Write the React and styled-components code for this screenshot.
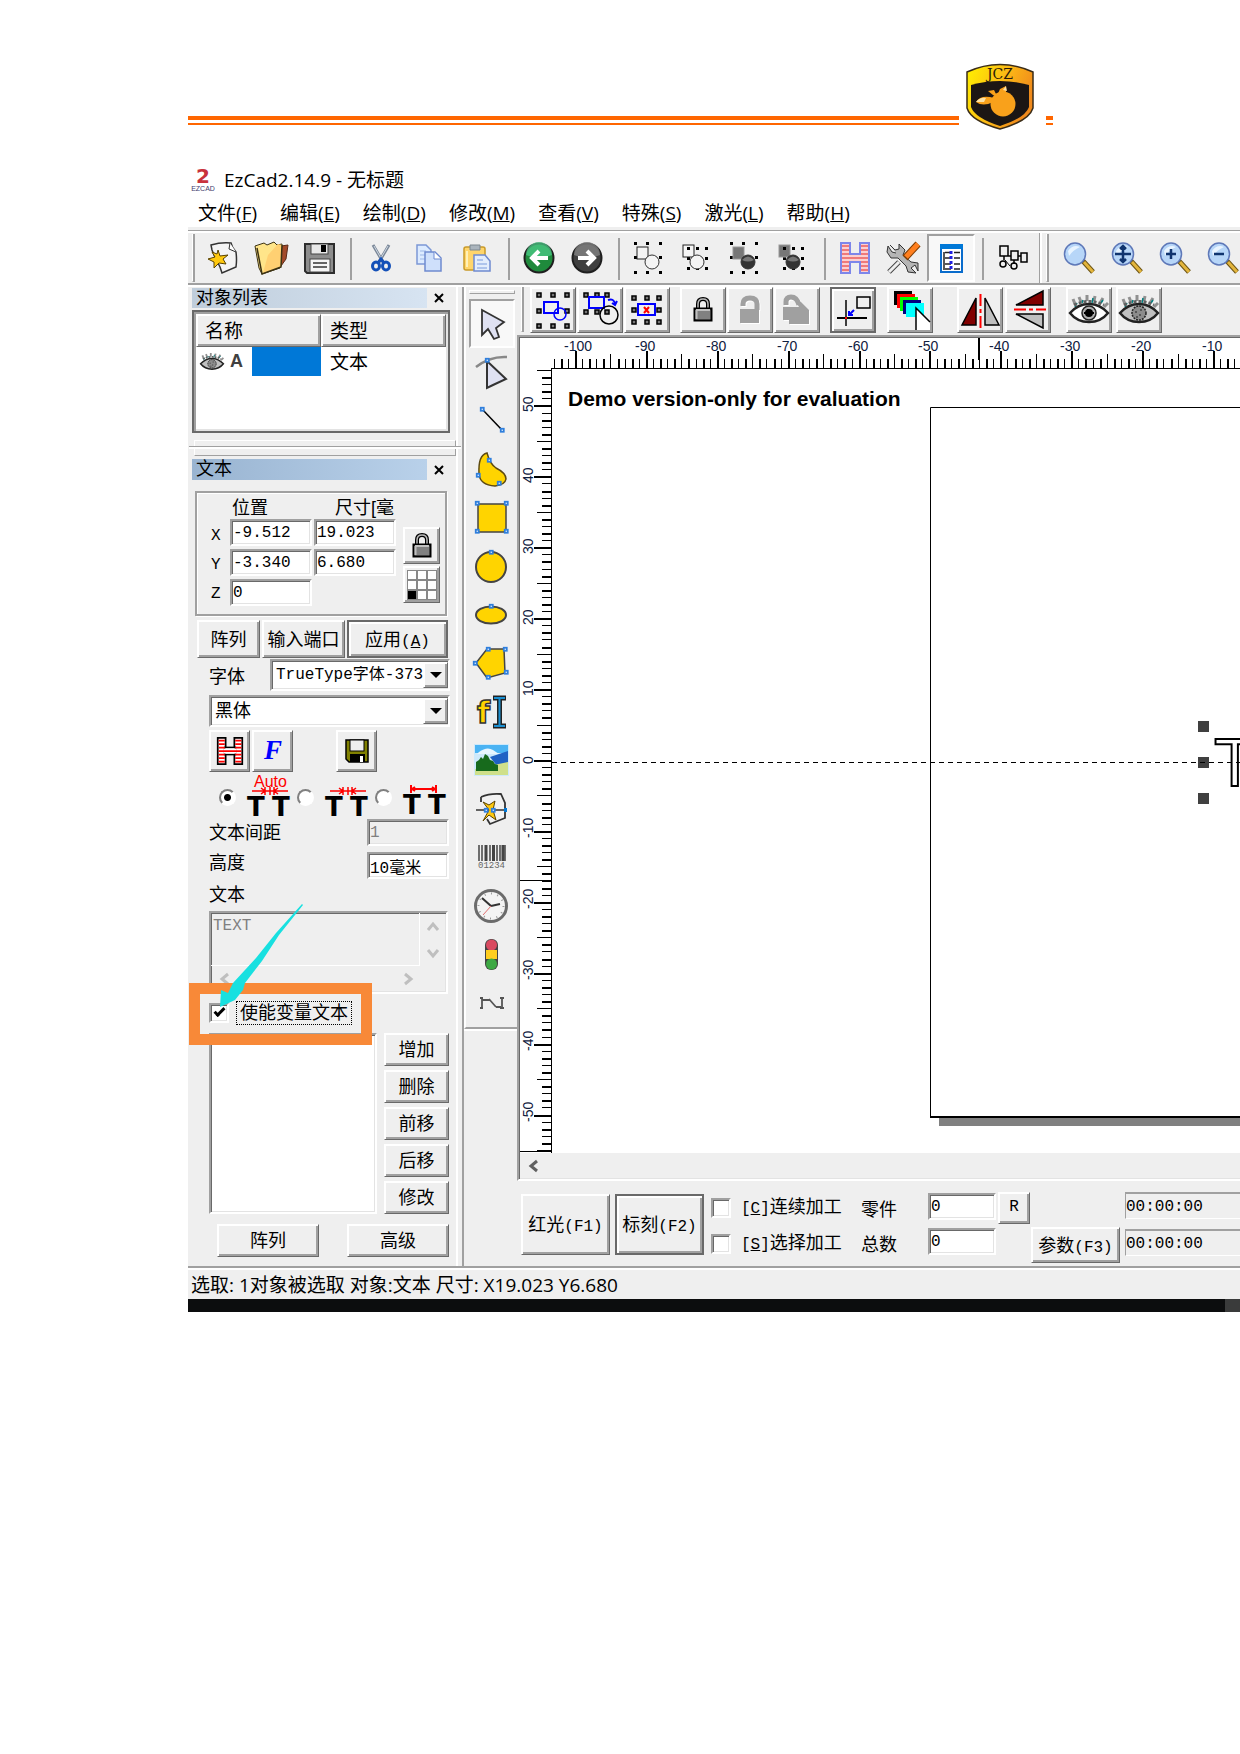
import React from 'react'
import styled, { createGlobalStyle, css } from 'styled-components'

const GlobalStyle = createGlobalStyle`
  *, *::before, *::after {
    box-sizing: border-box;
  }
  body {
    margin: 0;
    background: #fff;
    color: #000;
    overflow-x: hidden;
  }
  svg {
    display: block;
    flex: none;
    overflow: visible;
  }
`

const ui = '"Open Sans", "Noto Sans CJK SC", sans-serif'
const dialog = '"Liberation Sans", "Noto Sans CJK SC", sans-serif'
const mono = '"Liberation Mono", "Noto Sans CJK SC", monospace'

const raised = css`
  border: 1px solid;
  border-color: #fff #696969 #696969 #fff;
  box-shadow: inset 1px 1px #fff, inset -2px -2px #a0a0a0;
`

const sunken = css`
  border: 2px solid;
  border-color: #a0a0a0 #fff #fff #a0a0a0;
  box-shadow: inset 1px 1px #696969, inset -1px -1px #e3e3e3;
`

/* ---------- page header ---------- */

const Header = styled.header`
  display: flex;
  align-items: flex-start;
  margin: 0 187px 0 188px;
  padding-top: 64px;
`

const Rule = styled.div`
  flex: ${p => (p.$tail ? 'none' : 1)};
  width: ${p => (p.$tail ? '7px' : 'auto')};
  height: 9px;
  margin-top: 52px;
  border-top: 4px solid #ff6600;
  border-bottom: 2px solid #ff6600;
`

const LogoBox = styled.div`
  padding: 0 12px 0 7px;
`

const Logo = () => (
  <svg width="68" height="66" viewBox="0 0 68 66">
    <defs>
      <linearGradient id="gold" x1="0" y1="0" x2="1" y2="0.4">
        <stop offset="0" stopColor="#fff200" />
        <stop offset="0.6" stopColor="#fbb516" />
        <stop offset="1" stopColor="#f08a1c" />
      </linearGradient>
    </defs>
    <path d="M1 8Q34-7 67 8V44Q63 57 34 65Q5 57 1 44Z" fill="url(#gold)" stroke="#3a2c18" strokeWidth="1.5" />
    <path d="M5 21Q34 13 63 21V43Q59 54 34 62Q9 54 5 43Z" fill="#1c1614" />
    <circle cx="37" cy="40" r="12.500" fill="#f9a11b" />
    <path d="M27 38Q17 43 10 38Q15 30 28 34ZM31 32L34 25L40 22L40 29L37 32ZM22 27L28 26L31 32L27 31Z" fill="#f9a11b" />
    <path d="M10 38Q14 33 20 34L18 38ZM37 26L40 22L41 27Z" fill="#fde2a6" />
    <text x="34" y="15" textAnchor="middle" fontFamily="DejaVu Serif, serif" fontSize="14" fill="#2b1a08">
      JCZ
    </text>
  </svg>
)

/* ---------- window chrome ---------- */

const Window = styled.main`
  margin: 35px 0 0 188px;
  overflow: hidden;
  font: 18px ${dialog};
`

const TitleBar = styled.div`
  display: flex;
  align-items: center;
  gap: 9px;
  height: 32px;
  padding: 0 0 4px 3px;
  font: 19px ${ui};
`

const MenuBar = styled.nav`
  display: flex;
  gap: 23px;
  height: 30px;
  padding: 0 10px;
`

const MenuItem = styled.button`
  border: 0;
  padding: 0;
  background: none;
  color: #000;
  font: 19px/32px ${ui};
  white-space: nowrap;
`

const Toolbar = styled.div`
  display: flex;
  height: 58px;
  border-top: 3px solid #efefef;
  border-bottom: 2px solid #a0a0a0;
  background: #efefef;
  box-shadow: inset 0 1px #a0a0a0, inset 0 3px #fff;
`

const Gripper = styled.div`
  flex: none;
  width: 3px;
  height: ${p => p.$height}px;
  margin: ${p => p.$margin};
  border-right: 2px solid #a0a0a0;
  border-bottom: 1px solid #a0a0a0;
  border-left: 1px solid #fff;
`

const ToolButton = styled.button`
  display: flex;
  flex: none;
  align-items: center;
  justify-content: center;
  width: 48px;
  height: 48px;
  margin-top: 4px;
  padding: 0;
  background: ${p => (p.$checked ? '#f8f8f8' : 'none')};
  border: 2px solid transparent;
  border-color: ${p => (p.$checked ? '#a0a0a0 #fff #fff #a0a0a0' : 'transparent')};
`

const Divider = styled.div`
  flex: none;
  width: 2px;
  height: 42px;
  margin: 8px 5px 0 7px;
  background: #a0a0a0;
`

const BarEnd = styled.div`
  flex: none;
  width: 10px;
  margin: 3px 0 0 2px;
  border-left: 1px solid #a0a0a0;
  box-shadow: inset 2px 0 #fff;
`

/* ---------- work space ---------- */

const Workspace = styled.div`
  display: flex;
  border-top: 2px solid #fff;
  background: #efefef;
`

const Dock = styled.aside`
  flex: none;
  width: 276px;
  padding-right: 4px;
  border-right: 2px solid #a0a0a0;
`

const DockInner = styled.div`
  height: 100%;
  padding: 1px 6px 9px 4px;
  border-right: 2px solid #fff;
`

const PanelTitle = styled.div`
  display: flex;
  justify-content: space-between;
  align-items: center;
  height: ${p => (p.$active ? 21 : 20)}px;
  padding-right: 6px;

  h2 {
    width: 235px;
    height: 100%;
    margin: 0;
    padding-left: 4px;
    background: ${p =>
      p.$active ? 'linear-gradient(90deg, #99b4d1, #b9d1ea)' : 'linear-gradient(90deg, #bfcddb, #d7e4f2)'};
    font: 18px/20px ${dialog};
  }
`

const CloseButton = styled.button`
  width: 10px;
  height: 10px;
  padding: 0;
  border: 0;
  background: none;
`

const ObjectBox = styled.div`
  height: 123px;
  margin-top: 2px;
  padding: 2px;
  border: 2px solid #696969;
  background: #fff;
  box-shadow: inset 2px 2px #a0a0a0, inset -2px -2px #e3e3e3;
`

const ObjectTable = styled.table`
  width: 100%;
  border-spacing: 0;
  table-layout: fixed;

  th {
    ${raised};
    height: 33px;
    padding: 0 8px;
    background: #efefef;
    font: 19px/28px ${ui};
    text-align: left;
  }
  td {
    height: 29px;
    padding: 0 0 0 9px;
    font: 19px/28px ${ui};
  }
  td:first-child {
    padding: 0 0 0 4px;
  }
`

const NameCell = styled.div`
  display: flex;
  align-items: center;
  gap: 6px;
  height: 29px;
  font: bold 18px "Liberation Sans", sans-serif;
  color: #404040;

  span {
    width: 16px;
  }
`

const Selection = styled.i`
  flex: 1;
  height: 29px;
  background: #0078d7;
`

const Splitter = styled.div`
  height: 16px;
  margin: 7px -6px 3px 2px;
  border: 1px solid #a0a0a0;
  border-color: #fff #a0a0a0 #a0a0a0 #fff;

  &::before {
    content: '';
    display: block;
    height: 3px;
    margin: 5px -6px 0 -6px;
    border-top: 1px solid #a0a0a0;
    border-bottom: 2px solid #fff;
  }
`

const Position = styled.fieldset`
  display: grid;
  grid-template-columns: 17px 82px 82px 37px;
  column-gap: 2px;
  justify-content: start;
  height: 125px;
  margin: 11px 3px 0 3px;
  padding: 3px 0 0 14px;
  border: 2px solid #a0a0a0;
  box-shadow: inset 1px 1px #fff, 1px 1px #fff;
`

const Column = styled.div`
  display: flex;
  flex-direction: column;
  gap: ${p => p.$gap || 0}px;
  padding: ${p => p.$top || 0}px 0 0 ${p => p.$left || 0}px;
`

const Heading = styled.span`
  height: 20px;
  padding-left: ${p => p.$indent}px;
  line-height: 24px;
  white-space: nowrap;
`

const AxisLabel = styled.label`
  height: 24px;
  font: 16px/32px ${mono};
`

const Field = styled.input`
  ${sunken};
  flex: none;
  width: ${p => p.$width || 82}px;
  height: 27px;
  padding: 0 1px;
  border-radius: 0;
  background: #fff;
  color: #000;
  font: 16px ${mono};

  &:disabled {
    background: #efefef;
    color: #808080;
  }
`

const Button = styled.button`
  ${raised};
  display: flex;
  flex: none;
  align-items: center;
  justify-content: center;
  width: ${p => p.$width}px;
  height: ${p => p.$height || 33}px;
  padding: 0 0 ${p => (p['aria-label'] || p.title ? 0 : 3)}px;
  background: #efefef;
  color: #000;
  font: 18px ${dialog};
  white-space: nowrap;

  ${p =>
    p.$default &&
    css`
      border: 2px solid #696969;
      box-shadow: inset 2px 2px #fff, inset -2px -2px #a0a0a0;
    `}
`

const Latin = styled.span`
  font: 16px ${mono};
`

const Row = styled.div`
  display: flex;
  align-items: ${p => p.$align || 'center'};
  justify-content: ${p => p.$justify || 'flex-start'};
  gap: ${p => p.$gap || 0}px;
  margin: ${p => p.$margin || 0};
`

const FontLabel = styled.label`
  width: 61px;
`

const SelectBox = styled.div`
  ${sunken};
  display: flex;
  flex: 1;
  min-width: 0;
  height: 32px;
  padding: 1px 0 1px 2px;
  background: #fff;

  select {
    flex: 1;
    min-width: 0;
    padding: 0 0 0 2px;
    border: 0;
    appearance: none;
    background: none;
    color: #000;
    font: ${p => (p.$latin ? 16 : 18)}px ${p => (p.$latin ? mono : dialog)};
    overflow: hidden;
    text-overflow: clip;
  }
`

const DropArrow = styled.span`
  ${raised};
  display: flex;
  flex: none;
  align-items: center;
  justify-content: center;
  width: 25px;
  background: #efefef;
`

const SpacingOption = styled.label`
  display: flex;
  gap: 10px;

  input {
    width: 17px;
    height: 17px;
    margin: 14px 0 0;
    appearance: none;
    border: 2px solid;
    border-color: #808080 #fff #fff #808080;
    border-radius: 50%;
    background: #fff;
  }
  input:checked {
    background: radial-gradient(circle, #000 3px, #fff 4px);
  }
`

const FormLine = styled.div`
  display: flex;
  align-items: center;
  justify-content: space-between;
  height: ${p => p.$height || 27}px;
  margin: ${p => p.$margin || 0};

  label {
    padding-bottom: ${p => p.$lift || 3}px;
  }
`

const TextBox = styled.div`
  display: grid;
  grid-template-columns: 1fr 26px;
  grid-template-rows: 1fr 26px;
  ${sunken};
  width: 239px;
  height: 83px;

  textarea {
    min-width: 0;
    margin: 0;
    padding: 4px 2px;
    border: 0;
    border-right: 1px solid #fff;
    border-bottom: 1px solid #fff;
    resize: none;
    overflow: hidden;
    background: none;
    color: #808080;
    font: 16px ${mono};
  }
`

const ScrollTrack = styled.div`
  display: flex;
  flex-direction: ${p => (p.$vertical ? 'column' : 'row')};
  align-items: center;
  justify-content: space-between;
  padding: ${p => (p.$vertical ? '8px 0 7px' : '0 6px 0 8px')};
`

const Check = styled.input`
  ${sunken};
  flex: none;
  display: grid;
  place-items: center;
  width: 20px;
  height: 20px;
  margin: 0;
  appearance: none;
  background: #fff;

  &:checked::after {
    content: '';
    width: 11px;
    height: 6px;
    margin-top: -4px;
    border: solid #000;
    border-width: 0 0 3px 3px;
    transform: rotate(-45deg);
  }
`

const VariableRow = styled.div`
  position: relative;
  display: flex;
  align-items: center;
  gap: 7px;
  height: 24px;
  margin-top: 7px;

  label {
    height: 24px;
    padding: 0 3px;
    border: 1px dotted #000;
    line-height: 23px;
  }
`

/* marker drawn over the form */
const Callout = styled.div`
  position: absolute;
  z-index: 1;
  top: -18px;
  left: -20px;
  width: 183px;
  height: 62px;
  border: 11px solid #f88938;
  pointer-events: none;
`

const Pointer = styled.svg`
  position: absolute;
  z-index: 2;
  top: -98px;
  left: 9px;
  pointer-events: none;
`

const ListBox = styled.div`
  ${sunken};
  width: 168px;
  background: #fff;
`

/* ---------- drawing tools ---------- */

const ToolColumn = styled.div`
  display: flex;
  flex: none;
  flex-direction: column;
  width: 53px;
  height: 742px;
  padding: 3px 2px 0 3px;
  border-left: 2px solid #fff;
  border-bottom: 2px solid #a0a0a0;
  box-shadow: 0 2px #fff;
`

const ColumnGrip = styled.div`
  height: 4px;
  margin-bottom: 5px;
  border: 1px solid #a0a0a0;
  border-color: #fff #a0a0a0 #a0a0a0 #fff;
`

const DrawButton = styled.button`
  display: flex;
  flex: 1;
  align-items: center;
  justify-content: center;
  padding: 0;
  border: 2px solid;
  border-color: ${p => (p.$checked ? '#a0a0a0 #fff #fff #a0a0a0' : 'transparent')};
  background: ${p => (p.$checked ? '#f8f8f8' : 'none')};
`

const Center = styled.div`
  display: flex;
  flex: 1;
  flex-direction: column;
  min-width: 0;
`

const EditBar = styled.div`
  display: flex;
  height: 48px;
  overflow: hidden;
`

const EditButton = styled(Button)`
  width: 46px;
  height: 46px;
  margin-left: ${p => p.$left || 1}px;
`

const View = styled.section`
  display: grid;
  grid-template-columns: 31px 1fr;
  grid-template-rows: 31px 1fr 26px;
  flex: 1;
  border: solid #a0a0a0;
  border-width: 2px 0 0 2px;
  box-shadow: inset 1px 1px #696969;
  padding: 1px 0 0 1px;
  border-bottom: 2px solid #fff;

  > svg {
    width: 100%;
    height: 100%;
    background: #fff;
    overflow: hidden;
  }
`

const Sheet = styled.div`
  position: relative;
  overflow: hidden;
  background: #fff;
  border-left: 1px solid #000;

  > p {
    margin: 18px 0 0 16px;
    font: bold 21px/24px "Liberation Sans", sans-serif;
  }
  > svg {
    position: absolute;
    inset: 0;
    width: 100%;
    height: 100%;
  }
`

const HScroll = styled.div`
  grid-column: 1 / -1;
  display: flex;
  align-items: center;
  padding-left: 8px;
  background: #efefef;
  border-bottom: 1px solid #e3e3e3;
`

const MarkPanel = styled.div`
  display: flex;
  align-items: flex-start;
  height: 85px;
  padding: 10px 0 0 4px;
`

const CheckLine = styled.label`
  display: flex;
  align-items: center;
  gap: 10px;
  width: 150px;
  height: 21px;
  white-space: nowrap;

  span {
    line-height: 20px;
  }
`

const CountLine = styled.label`
  display: flex;
  align-items: center;

  span {
    width: 67px;
    padding-top: 3px;
  }
`

const Clock = styled.output`
  display: block;
  width: 160px;
  height: 27px;
  border: 1px solid;
  border-top-width: 2px;
  border-color: #a0a0a0 #fff #fff #a0a0a0;
  font: 16px/26px ${mono};
`

const StatusBar = styled.footer`
  height: 33px;
  padding-left: 3px;
  border-top: 2px solid #a0a0a0;
  background: #efefef;
  box-shadow: inset 0 2px #fff;
  font: 19px/34px ${ui};
`

const Taskbar = styled.div`
  height: 13px;
  border-right: 15px solid #3a3b3b;
  background: #0c0d0e;
`

/* ---------- icons ---------- */

const Icon = ({ size = 32, children, ...rest }) => (
  <svg width={size} height={size} viewBox={`0 0 ${size} ${size}`} aria-hidden="true" {...rest}>
    {children}
  </svg>
)

const dots = (xs, ys, s) =>
  ys.flatMap((y, j) =>
    xs.map((x, i) => (i === 1 && j === 1 ? null : <rect key={`${x}-${y}`} x={x} y={y} width={s} height={s} />))
  )

const hollow = points =>
  points.map(([x, y]) => (
    <rect key={`${x}-${y}`} x={x + 0.75} y={y + 0.75} width="3" height="3" fill="#fff" stroke="#2f7fdc" strokeWidth="1.8" />
  ))

const NewIcon = () => (
  <Icon>
    <path d="M4 3Q14 0 24 1Q25 6 29 10Q30 18 29 25L15 31L13 25L7 13L5 8Z" fill="#f4f4f4" stroke="#333" strokeWidth="1.5" />
    <path d="M23 1L22 7L29 10" fill="#fff" stroke="#333" />
    <path d="M11 8L13 14L21 13L16 17L19 22L12 21L7 26L7 20L1 17L8 15L5 10L10 12Z" fill="#ffc90e" stroke="#5a4300" />
  </Icon>
)
const OpenIcon = () => (
  <Icon size={34}>
    <path d="M27 5L34 4L32 18L27 25Z" fill="#a34a2a" stroke="#5b2a18" />
    <path d="M1 5L10 2L13 4L20 1L23 4L28 3L26 27L8 33L5 27Z" fill="#ffe58a" stroke="#3c3213" />
    <path d="M14 14L24 3L28 4L27 26L9 32Z" fill="#ffd072" />
    <path d="M3 7L8 33L27 26L28 4" fill="none" stroke="#3c3213" strokeWidth="1.5" />
  </Icon>
)
const SaveIcon = () => (
  <Icon>
    <path d="M2 2H31V31H4L2 29Z" fill="#8d8d8d" stroke="#2d2d2d" strokeWidth="2" />
    <rect x="8" y="2" width="17" height="10" fill="#e8e8e8" stroke="#444" />
    <rect x="18" y="3" width="5" height="7" fill="#000" />
    <rect x="7" y="17" width="20" height="13" fill="#f4f4f4" stroke="#444" />
    <path d="M10 21H24M10 25H24" stroke="#333" strokeWidth="1.5" />
  </Icon>
)
const CutIcon = () => (
  <Icon>
    <path d="M8 3L18 20M24 3L14 20" stroke="#7a8798" strokeWidth="3" />
    <path d="M9 4L17 18M23 4L16 16" stroke="#cfd8e2" />
    <ellipse cx="11" cy="24" rx="3.5" ry="4" fill="none" stroke="#1450b8" strokeWidth="3" />
    <ellipse cx="21" cy="24" rx="3.5" ry="4" fill="none" stroke="#1450b8" strokeWidth="3" />
    <path d="M13 21L16 17L19 21" fill="none" stroke="#1450b8" strokeWidth="3" />
  </Icon>
)
const CopyIcon = () => (
  <Icon>
    <path d="M4 3H13L18 8V22H4Z" fill="#dcebff" stroke="#7c98d6" strokeWidth="1.5" />
    <path d="M7 9H13M7 13H14M7 17H14" stroke="#9db7e6" />
    <path d="M12 10H22L28 16V29H12Z" fill="#cfe0fb" stroke="#6f8ad0" strokeWidth="1.5" />
    <path d="M21 10V17H28" fill="#fff" stroke="#6f8ad0" />
  </Icon>
)
const PasteIcon = () => (
  <Icon>
    <rect x="3" y="5" width="21" height="23" rx="2" fill="#ffd56b" stroke="#c99a2a" strokeWidth="1.5" />
    <path d="M9 3H19V8H9Z" fill="#aab4bd" stroke="#7d878f" />
    <path d="M6 9L6 25" stroke="#fff1b8" strokeWidth="2" />
    <path d="M13 13H24L29 19V29H13Z" fill="#e3edfc" stroke="#6f8ad0" strokeWidth="1.5" />
    <path d="M16 18H22M16 22H26M16 26H26" stroke="#9db7e6" strokeWidth="1.5" />
  </Icon>
)
const RoundArrow = ({ from, to, d }) => (
  <Icon>
    <circle cx="16" cy="16" r="14.5" fill={from} stroke="#1f1f1f" strokeWidth="2" />
    <path d="M3 13A13 13 0 0 1 29 13Q16 19 3 13Z" fill={to} opacity="0.7" />
    <path d={d} fill="none" stroke="#fff" strokeWidth="4" />
  </Icon>
)
const ShapesIcon = ({ solid, tight }) => (
  <Icon>
    {tight ? dots([6, 15, 24], [5, 15, 25], 3) : dots([1, 13, 26], [0, 14, 29], 3)}
    <rect x={tight ? 2 : 4} y={tight ? 3 : 5} width="11" height="12" fill={solid ? '#777' : '#fff'} stroke={solid ? '#999' : '#222'} fillOpacity={solid ? 1 : 0.4} />
    <circle cx={tight ? 16 : 19} cy={20} r="7" fill={solid ? '#333' : '#f4f4f4'} stroke="#333" />
    {solid && <path d={tight ? 'M10 18Q16 11 22 18Q16 21 10 18Z' : 'M13 18Q19 11 25 18Q19 21 13 18Z'} fill="#777" />}
    {tight && <rect x="6" y="5" width="3" height="3" />}
  </Icon>
)
const HatchIcon = ({ size = 32, line, edge, back }) => (
  <Icon size={size}>
    {[
      [2, 1, 9, 30],
      [21, 1, 9, 30],
      [10, 12, 12, 8]
    ].map(([x, y, w, h]) => (
      <rect key={x} x={x} y={y} width={w} height={h} fill={back} stroke={edge} strokeWidth="2" />
    ))}
    <rect x="9" y="13" width="14" height="6" fill={back} />
    <path d="M3 4H10M3 8H10M3 12H10M3 16H29M3 20H10M3 24H10M3 28H10M22 4H29M22 8H29M22 12H29M22 20H29M22 24H29M22 28H29" stroke={line} strokeWidth="2" />
  </Icon>
)
const WrenchIcon = () => (
  <Icon size={34}>
    <path d="M3 31L13 21" stroke="#444" strokeWidth="5" />
    <path d="M3 31L13 21" stroke="#eee" strokeWidth="3" />
    <path d="M4 4L9 9L13 8L13 3L19 9L17 14L25 21L32 22L32 30L29 24L25 27L30 32L22 31L20 25L12 17L5 17L1 11L2 5L6 11L10 12" fill="#b5b5b5" stroke="#333" />
    <path d="M19 17L32 3" stroke="#7a3a00" strokeWidth="7" />
    <path d="M20 16L32 3" stroke="#ff7f1e" strokeWidth="5" />
  </Icon>
)
const ListIcon = () => (
  <Icon>
    <rect x="6" y="4" width="21" height="26" fill="#fff" stroke="#0a6ccc" strokeWidth="2" />
    <rect x="5" y="2" width="23" height="5" fill="#0078d7" />
    <path d="M9 10V28M10 10.500H16M19 10.500H25M10 16H16M19 16H25M10 22H16M19 22H25M10 27H16M19 27H25" stroke="#222" strokeWidth="1.5" />
    <path d="M16 9V28" stroke="#2020e0" strokeWidth="3" strokeDasharray="3 2" />
  </Icon>
)
const NodesIcon = () => (
  <Icon>
    <path d="M3 4H11V14H3ZM14 9H21V18H14ZM24 11H30V20H24ZM11 14H14M21 14H24M7 14V18M17 18V22" fill="none" stroke="#000" strokeWidth="1.5" />
    <circle cx="6" cy="22" r="3" fill="none" stroke="#000" strokeWidth="1.5" />
    <circle cx="17" cy="24" r="3" fill="none" stroke="#000" strokeWidth="1.5" />
    <path d="M8 18L13 24" stroke="#000" />
  </Icon>
)
const ZoomIcon = ({ d }) => (
  <Icon>
    <path d="M20 19L30 30" stroke="#6b5313" strokeWidth="5" />
    <path d="M21 20L30 30" stroke="#e3b53c" strokeWidth="3" />
    <ellipse cx="12" cy="12" rx="10.5" ry="11" fill="#b7d6f8" stroke="#5e78b8" strokeWidth="1.5" />
    <path d="M5 9Q10 2 17 5Q10 8 6 14Z" fill="#e8f4ff" />
    <path d={d} fill="none" stroke="#10346f" strokeWidth="2.5" />
  </Icon>
)

const EyeIcon = ({ size = 40, dim }) => (
  <svg width={size} height={size * 0.75} viewBox="0 0 40 30" aria-hidden="true">
    <path d="M6 9L4 4M12 7L10 2M18 6L18 0M25 6L26 1M31 8L34 3M35 12L39 8" stroke="#909090" strokeWidth="3" />
    <path d="M8 8L6 12M14 5L13 8M24 3L23 8M32 8L34 5" stroke="#008080" strokeWidth="1.5" />
    <path d="M1 18Q9 9 20 9T39 18Q32 27 20 27T1 18Z" fill={dim ? '#c0c0c0' : '#fff'} stroke="#222" strokeWidth="2.5" />
    <path d="M5 10Q20 3 35 10" fill="none" stroke="#606060" strokeWidth="3" strokeDasharray="3 2" />
    <circle cx="20" cy="18" r="7" fill={dim ? '#8c8c8c' : '#b0b0b0'} stroke="#222" strokeWidth="1.5" strokeDasharray={dim ? '2 1' : undefined} />
    {!dim && <circle cx="20" cy="18" r="4" fill="#000" />}
    {!dim && <path d="M15 18H25M18 15H20" stroke="#000" strokeWidth="2" />}
    {dim && <path d="M16 17H18M21 15H23M20 20H22M17 22H19" stroke="#444" strokeWidth="1.5" />}
  </svg>
)
const LockIcon = ({ size = 26 }) => (
  <svg width={size - 6} height={size} viewBox="0 0 20 26" aria-hidden="true">
    <path d="M5 12V7Q5 2 10 2T15 7V12" fill="none" stroke="#000" strokeWidth="4" />
    <path d="M5 12V7Q5 2 10 2T15 7V12" fill="none" stroke="#bbb" strokeWidth="1.5" />
    <rect x="1.5" y="11.5" width="17" height="12" fill="#808080" stroke="#000" strokeWidth="2" />
    <path d="M3 13H17M3.5 13V22" stroke="#c0c0c0" strokeWidth="2" />
  </svg>
)
const OpenLockIcon = ({ twice }) => (
  <Icon size={32}>
    {[[1, '#fff'], [0, '#a0a0a0']].map(([o, c]) => (
      <g key={c} transform={`translate(${o} ${o})`}>
        <path d={twice ? 'M5 11V8Q5 3 10 3Q16 3 18 11' : 'M9 12V10Q9 4 16 4T23 10V16'} fill="none" stroke={c} strokeWidth="5" />
        <path d={twice ? 'M2 13H18L14 6L20 8L28 16V30H8V26H2Z' : 'M6 15H25V29H6Z'} fill={c} />
      </g>
    ))}
  </Icon>
)

const groupHandles = {
  all: [[3, 2], [17, 2], [31, 2], [3, 18], [31, 18], [3, 33], [17, 33], [31, 33]],
  split: [[3, 2], [14, 2], [24, 2], [3, 19], [14, 19], [24, 19]],
  clear: [[4, 5], [17, 5], [29, 5], [4, 17], [29, 17], [4, 29], [17, 29], [29, 29]]
}

const GroupIcon = ({ kind }) => (
  <Icon size={38}>
    {groupHandles[kind].map(([x, y]) => (
      <rect key={`${x}-${y}`} x={x} y={y} width="4" height="4" fill="#777" stroke="#000" strokeWidth="1.5" />
    ))}
    {kind === 'clear' && <path d="M10 13H27V24H10Z" fill="none" stroke="#0000ff" strokeWidth="2" />}
    {kind === 'clear' && <path d="M16 16L21 22M21 16L16 22" stroke="#f00" strokeWidth="2" />}
    {kind === 'split' && <path d="M8 6H23V17H8ZM27 9Q33 7 34 13M31 12L34 14L36 10" fill="none" stroke="#0000ff" strokeWidth="2" />}
    {kind === 'split' && <circle cx="28" cy="24" r="9" fill="none" stroke="#000" strokeWidth="1.5" />}
    {kind === 'all' && <path d="M10 11H24V22H10Z" fill="none" stroke="#0000ff" strokeWidth="2" />}
    {kind === 'all' && <circle cx="26" cy="23" r="6" fill="none" stroke="#0000ff" strokeWidth="1.5" />}
  </Icon>
)
const OriginIcon = () => (
  <Icon size={36}>
    <path d="M22 5H35V16H22Z" fill="#efefef" stroke="#000" strokeWidth="1.5" />
    <path d="M11 8V34" stroke="#000" strokeWidth="1.5" />
    <path d="M2 26H32" stroke="#000" strokeWidth="2" />
    <path d="M19 18L14 23M14 19V23H18" fill="none" stroke="#0000ff" strokeWidth="2" />
    <rect x="10" y="25" width="2" height="2" fill="#f00" />
  </Icon>
)
const LayersIcon = () => (
  <Icon size={42}>
    {['#000', '#f00', '#0f0', '#000080', '#0ff'].map((fill, i) => (
      <rect key={fill} x={5 + i * 3} y={2 + i * 3} width="18" height="14" fill={fill} />
    ))}
    <path d="M27 41V19L41 33V41Z" fill="#fff" />
    <path d="M27 41V19L41 33" fill="none" stroke="#000" strokeWidth="1.5" />
  </Icon>
)
const MirrorIcon = ({ flip }) => (
  <Icon size={40}>
    <path d={flip ? 'M8 15H35V1Z' : 'M2 35H16V8Z'} fill="#800000" stroke="#000" strokeWidth="1.5" />
    <path d={flip ? 'M8 24H35V38Z' : 'M25 8V35H39Z'} fill="#c0c0c0" stroke="#000" strokeWidth="1.5" />
    <path d={flip ? 'M6 19.5H38' : 'M20.5 4V38'} stroke="#f00" strokeWidth="2" strokeDasharray="12 3 4 3" />
  </Icon>
)

const drawTools = [
  ['选取', <Icon size={32}><path d="M6 3V28L12 22L18 32L23 30L20 21L28 15Z" fill="#dfe1f2" stroke="#333" strokeWidth="1.8" /></Icon>],
  ['节点编辑', <Icon size={34}><path d="M1 12Q15 1 32 2" fill="none" stroke="#888" strokeWidth="2.5" /><path d="M12 6V33L18 30L31 24Z" fill="#dfe1f2" stroke="#333" strokeWidth="2" />{hollow([[10, 3]])}</Icon>],
  ['点', <Icon><path d="M6 5L26 26" stroke="#000" strokeWidth="1.5" />{hollow([[4, 3], [24, 24]])}</Icon>],
  ['曲线', <Icon size={34}><path d="M12 1Q3 3 4 22Q5 33 20 34Q30 33 31 27Q31 21 21 16Q15 12 12 1Z" fill="#ffd400" stroke="#5d4a12" strokeWidth="1.5" />{hollow([[12, 6], [1, 21], [22, 29]])}</Icon>],
  ['矩形', <Icon size={34}><rect x="3" y="4" width="28" height="28" fill="#ffd400" stroke="#444" strokeWidth="1.5" />{hollow([[0, 1], [29, 1], [0, 29], [29, 29]])}</Icon>],
  ['圆', <Icon size={34}><circle cx="16" cy="18" r="15" fill="#ffd400" stroke="#444" strokeWidth="2" />{hollow([[14, 1]])}</Icon>],
  ['椭圆', <Icon size={34}><ellipse cx="16" cy="18" rx="15" ry="8.5" fill="#ffd400" stroke="#444" strokeWidth="2" />{hollow([[14, 7]])}</Icon>],
  ['多边形', <Icon size={34}><path d="M12 3H29L30 27L12 32L1 17Z" fill="#ffd400" stroke="#444" strokeWidth="1.5" />{hollow([[11, 1], [28, 1], [-2, 15], [29, 24], [11, 29]])}</Icon>],
  ['文字', <Icon size={34}><text x="2" y="28" fontFamily="DejaVu Sans, sans-serif" fontWeight="bold" fontSize="30" fill="#ffd400" stroke="#333" strokeWidth="1.5">f</text><path d="M18 3H31M24.5 3V31M18 31H31" stroke="#222" strokeWidth="5" /><path d="M19 3H30M24.5 3V31M19 31H30" stroke="#1b8fd0" strokeWidth="2" /></Icon>],
  ['位图', <Icon size={34}><rect x="-1" y="1" width="35" height="32" fill="#cde9fb" /><path d="M0 2H33V10H0Z" fill="#4ab3f3" /><path d="M4 9Q12 3 18 7L24 11H2Z" fill="#e8f6ff" /><path d="M15 14L33 8V20L22 23Z" fill="#1f62c4" /><path d="M0 26L33 19V32H0Z" fill="#cfe08a" /><path d="M1 28V19L4 17L6 14L8 16L10 11L13 13L15 17L18 18L20 21L23 22V28Z" fill="#176a1c" /></Icon>],
  ['矢量文件', <Icon size={32}><path d="M5 4Q14 0 25 1L29 10V25L14 31L11 26M5 4V9" fill="#f2f2f2" stroke="#333" strokeWidth="1.8" /><path d="M0 17H30" stroke="#333" strokeWidth="1.5" /><path d="M13 17L7 9L13 12L19 8L17 17L20 27L13 22L7 28Z" fill="#ffc90e" stroke="#5a4300" />{hollow([[8, 15], [15, 15]])}<rect x="28" y="15" width="3" height="4" fill="#0078d7" /></Icon>],
  ['条码', <Icon size={30}><path d="M2 3V19M5 3V19M13 3V19M20 3V19M23 3V19M28 3V19" stroke="#444" strokeWidth="1.5" /><path d="M9 3V19M16.5 3V19M26 3V19" stroke="#444" strokeWidth="3" /><text x="1" y="26" fontFamily="Liberation Mono, monospace" fontSize="9" fill="#666">01234</text></Icon>],
  ['延时器', <Icon size={36}><circle cx="17" cy="18" r="15.5" fill="#f4f4f4" stroke="#6b6b6b" strokeWidth="3" /><circle cx="17" cy="18" r="12.5" fill="none" stroke="#999" strokeDasharray="1 5.5" strokeWidth="2" /><path d="M17 18L8 10M17 18L26 16" stroke="#333" strokeWidth="2" /><path d="M17 18L9 27" stroke="#e07070" /></Icon>],
  ['输入口', <Icon size={34}><rect x="10" y="2" width="13" height="31" rx="6" fill="#444" /><circle cx="16.5" cy="8" r="5.5" fill="#d94a60" /><rect x="11" y="13" width="11" height="9" fill="#ffce1f" /><circle cx="16.5" cy="27" r="5.5" fill="#3da843" /></Icon>],
  ['扩展轴', <Icon size={26}><path d="M3 7V19M1 8H4M1 18H4M3 10H11M10 9L17 17M17 17H22M23 7V19M21 8H25M21 18H25" fill="none" stroke="#555" strokeWidth="1.8" /></Icon>]
]

/* ---------- rulers ---------- */

const STEP = 70.9
const ticks = Array.from({ length: 125 }, (_, i) => i - 104)
const downTicks = Array.from({ length: 111 }, (_, i) => 55 - i)
const depth = v => (v % 10 === 0 ? 17 : v % 5 === 0 ? 14 : 9)

const RulerText = styled.text`
  font: 14px "Liberation Sans", sans-serif;
  fill: #102040;
`

const AcrossRuler = styled.svg`
  grid-column: 1 / -1;
`

const TopRuler = () => (
  <AcrossRuler>
    {ticks.map(v => {
      const x = Math.round(764 + (v * STEP) / 10)
      return (
        <React.Fragment key={v}>
          {v > -104 && <rect x={x} y={30 - depth(v)} width={v % 2 ? 1 : 2} height={depth(v)} />}
          {v % 10 === 0 && v <= -10 && (
            <RulerText x={x - 11} y="13">
              {v}
            </RulerText>
          )}
        </React.Fragment>
      )
    })}
    <rect x="31" y="30" width="100%" height="1" />
    <rect x="458" width="2" height="22" />
  </AcrossRuler>
)

const SideRuler = () => (
  <svg>
    {downTicks.map(v => {
      const y = Math.round(391 - (v * STEP) / 10)
      return (
        <React.Fragment key={v}>
          <rect x={31 - depth(v)} y={y} width={depth(v)} height={v % 2 ? 1 : 2} />
          {v % 10 === 0 && (
            <RulerText transform={`translate(13 ${y + (v === 0 ? 4 : 7)}) rotate(-90)`}>{v}</RulerText>
          )}
        </React.Fragment>
      )
    })}
    <rect y="511" width="31" height="1" />
    <rect y="782" width="31" height="1" />
  </svg>
)

/* ---------- data ---------- */

const menus = [
  ['文件', 'F'],
  ['编辑', 'E'],
  ['绘制', 'D'],
  ['修改', 'M'],
  ['查看', 'V'],
  ['特殊', 'S'],
  ['激光', 'L'],
  ['帮助', 'H']
]

const mainTools = [
  ['新建', <NewIcon />],
  ['打开', <OpenIcon />],
  ['保存', <SaveIcon />],
  null,
  ['剪切', <CutIcon />],
  ['复制', <CopyIcon />],
  ['粘贴', <PasteIcon />],
  null,
  ['撤消', <RoundArrow from="#1f8a3c" to="#4fd08c" d="M25 16H9M16 9L9 16L16 23" />],
  ['恢复', <RoundArrow from="#3f3f3f" to="#8d8d8d" d="M7 16H23M16 9L23 16L16 23" />],
  null,
  ['组合', <ShapesIcon />],
  ['分离组合', <ShapesIcon tight />],
  ['群组', <ShapesIcon solid />],
  ['分离群组', <ShapesIcon solid tight />],
  null,
  ['填充', <HatchIcon line="#f07a7a" edge="#7d86ea" back="#fbd0d0" />],
  ['系统参数', <WrenchIcon />],
  ['对象列表', <ListIcon />, true],
  null,
  ['节点', <NodesIcon />]
]

const zoomTools = [
  ['缩放', ''],
  ['平移', 'M12 4V20M4 12H20M9 7L12 4L15 7M9 17L12 20L15 17'],
  ['放大', 'M12 7V17M7 12H17'],
  ['缩小', 'M7 12H17']
]

const editTools = [
  ['全选', <GroupIcon kind="all" />, 6],
  ['反选', <GroupIcon kind="split" />],
  ['删除选择', <GroupIcon kind="clear" />],
  ['锁定', <LockIcon />, 10],
  ['解锁', <OpenLockIcon />],
  ['全部解锁', <OpenLockIcon twice />],
  ['放到原点', <OriginIcon />, 10, true],
  ['图层', <LayersIcon />, 11],
  ['左右镜像', <MirrorIcon />, 24],
  ['上下镜像', <MirrorIcon flip />, 2],
  ['显示', <EyeIcon />, 15],
  ['隐藏', <EyeIcon dim />, 4]
]

const arrows = {
  up: 'M1 9L6 3L11 9',
  down: 'M1 3L6 9L11 3',
  left: 'M9 1L3 6L9 11',
  right: 'M3 1L9 6L3 11'
}

const Chevron = ({ to, color = '#bfbfbf' }) => (
  <Icon size={12}>
    <path d={arrows[to]} fill="none" stroke={color} strokeWidth="3" />
  </Icon>
)

const Close = () => (
  <CloseButton aria-label="关闭">
    <Icon size={10}>
      <path d="M1 1L9 9M9 1L1 9" stroke="#000" strokeWidth="2" />
    </Icon>
  </CloseButton>
)

const Triangle = () => (
  <svg width="12" height="6" viewBox="0 0 12 6" aria-hidden="true">
    <path d="M0 0H12L6 6Z" />
  </svg>
)

const gaps = [
  'M6 16H42M19 12V20M24 12V20M28 12V20M15 13L19 16L15 19M32 13L28 16L32 19',
  'M6 16H42M19 12V20M24 12V20M15 13L19 16L15 19M32 13L28 16L32 19M28 12V20',
  'M9 14H34M9 10V18M34 10V18M13 12L10 14L13 16M30 12L33 14L30 16'
]

const SpacingIcon = ({ index }) => (
  <svg width="44" height="42" viewBox="0 0 44 42" aria-hidden="true">
    {index === 0 && (
      <text x="8" y="12" fontFamily="Liberation Sans, sans-serif" fontSize="16" fill="#f00">
        Auto
      </text>
    )}
    <path d={gaps[index]} stroke="#f00" strokeWidth={index === 2 ? 2 : 1.5} fill="none" />
    <g fontFamily="DejaVu Sans, sans-serif" fontWeight="bold" fontSize="26">
      <text x="1" y={index === 2 ? 39 : 41}>T</text>
      <text x="26" y={index === 2 ? 39 : 41}>T</text>
    </g>
  </svg>
)

/* ---------- panels ---------- */

const ObjectList = () => (
  <>
    <PanelTitle>
      <h2>对象列表</h2>
      <Close />
    </PanelTitle>
    <ObjectBox>
      <ObjectTable>
        <thead>
          <tr>
            <th>名称</th>
            <th>类型</th>
          </tr>
        </thead>
        <tbody>
          <tr>
            <td>
              <NameCell>
                <EyeIcon size={24} dim />
                <span>A</span>
                <Selection />
              </NameCell>
            </td>
            <td>文本</td>
          </tr>
        </tbody>
      </ObjectTable>
    </ObjectBox>
  </>
)

const PositionBox = () => (
  <Position>
    <Column $top={24} $gap={5}>
      <AxisLabel htmlFor="x">X</AxisLabel>
      <AxisLabel htmlFor="y">Y</AxisLabel>
      <AxisLabel htmlFor="z">Z</AxisLabel>
    </Column>
    <Column $gap={3}>
      <Heading $indent={2}>位置</Heading>
      <Field id="x" defaultValue="-9.512" />
      <Field id="y" defaultValue="-3.340" />
      <Field id="z" defaultValue="0" />
    </Column>
    <Column $gap={3}>
      <Heading $indent={21}>尺寸[毫</Heading>
      <Field aria-label="宽" defaultValue="19.023" />
      <Field aria-label="高" defaultValue="6.680" />
    </Column>
    <Column $top={31} $left={5} $gap={2}>
      <Button $width={37} $height={37} aria-label="锁定比例">
        <LockIcon size={26} />
      </Button>
      <Button $width={37} $height={37} aria-label="基准点">
        <Icon size={30}>
          <rect width="30" height="30" fill="#888" />
          {[1, 11, 21].map(x =>
            [1, 11, 21].map(y => (
              <rect key={`${x}${y}`} x={x} y={y} width="8" height="8" fill={x === 1 && y === 21 ? '#000' : '#fff'} />
            ))
          )}
        </Icon>
      </Button>
    </Column>
  </Position>
)

const TextPanel = () => (
  <>
    <PanelTitle $active>
      <h2>文本</h2>
      <Close />
    </PanelTitle>
    <PositionBox />
    <Row $gap={2} $margin="4px 0 0 5px">
      <Button $width={63} $height={38}>阵列</Button>
      <Button $width={83} $height={38}>输入端口</Button>
      <Button $width={101} $height={38} $default>
        <span>应用<Latin>(<u>A</u>)</Latin></span>
      </Button>
    </Row>
    <Row $margin="1px 0 0 17px">
      <FontLabel htmlFor="font-kind">字体</FontLabel>
      <SelectBox $latin>
        <select id="font-kind">
          <option>TrueType字体-373</option>
        </select>
        <DropArrow><Triangle /></DropArrow>
      </SelectBox>
    </Row>
    <Row $margin="4px 0 0 17px">
      <SelectBox>
        <select aria-label="字体名">
          <option>黑体</option>
        </select>
        <DropArrow><Triangle /></DropArrow>
      </SelectBox>
    </Row>
    <Row $margin="3px 0 0 17px" $gap={2}>
      <Button $width={41} $height={42} aria-label="填充">
        <svg width="28" height="30" viewBox="0 0 32 32" aria-hidden="true">
          <HatchIcon line="#f00" edge="#000" back="#fff" />
        </svg>
      </Button>
      <Button $width={41} $height={42} aria-label="字体参数">
        <Icon size={28}>
          <text x="5" y="22" fontFamily="Liberation Serif, serif" fontStyle="italic" fontWeight="bold" fontSize="27" fill="#00f">
            F
          </text>
        </Icon>
      </Button>
      <Row $margin="0 0 0 41px">
        <Button $width={41} $height={42} aria-label="保存">
          <Icon size={24}>
            <path d="M1 1H23V23H4L1 20Z" fill="#808000" stroke="#000" strokeWidth="1.5" />
            <rect x="5" y="1" width="14" height="11" fill="#efefef" stroke="#000" />
            <path d="M5 15H20V23H5Z" />
            <rect x="15" y="17" width="3" height="6" fill="#fff" />
          </Icon>
        </Button>
      </Row>
    </Row>
    <Row $margin="3px 0 0 27px" $gap={7}>
      {['自动', '字间距', '字宽'].map((name, i) => (
        <SpacingOption key={name}>
          <input type="radio" name="spacing" defaultChecked={i === 0} aria-label={name} />
          <SpacingIcon index={i} />
        </SpacingOption>
      ))}
    </Row>
    <FormLine $margin="2px 1px 0 17px">
      <label htmlFor="gap">文本间距</label>
      <Field id="gap" defaultValue="1" disabled />
    </FormLine>
    <FormLine $margin="6px 1px 0 17px" $lift={9}>
      <label htmlFor="height">高度</label>
      <Field id="height" defaultValue="10毫米" />
    </FormLine>
    <FormLine $height={32} $margin="0 0 0 17px" $lift={4}>
      <label htmlFor="content">文本</label>
    </FormLine>
    <Row $margin="0 0 0 17px">
      <TextBox>
        <textarea id="content" defaultValue="TEXT" disabled />
        <ScrollTrack $vertical>
          <Chevron to="up" />
          <Chevron to="down" />
        </ScrollTrack>
        <ScrollTrack>
          <Chevron to="left" />
          <Chevron to="right" />
        </ScrollTrack>
      </TextBox>
    </Row>
    <Row $margin="0 0 0 17px">
      <VariableRow>
        <Check type="checkbox" id="variable" defaultChecked />
        <label htmlFor="variable">使能变量文本</label>
        <Callout />
        <Pointer width="88" height="106" viewBox="0 0 88 106" aria-hidden="true">
          <path d="M84 1L85 2L61 32L44 58L27 80L25 87L17 97L2 104L3 87L10 90L15 80L38 55L58 30Z" fill="#18e0e0" />
        </Pointer>
      </VariableRow>
    </Row>
    <Row $margin="8px 1px 0 17px" $align="stretch" $justify="space-between">
      <ListBox role="listbox" aria-label="变量" />
      <Column $gap={4}>
        {['增加', '删除', '前移', '后移', '修改'].map(name => (
          <Button key={name} $width={65} $height={33}>
            {name}
          </Button>
        ))}
      </Column>
    </Row>
    <Row $margin="10px 0 0 25px" $gap={28}>
      <Button $width={102}>阵列</Button>
      <Button $width={102}>高级</Button>
    </Row>
  </>
)

const Drawing = () => (
  <View>
    <TopRuler />
    <SideRuler />
    <Sheet>
      <p>Demo version-only for evaluation</p>
      <svg aria-hidden="true">
        <rect x="387" y="749" width="1000" height="8" fill="#808080" />
        <path d="M378.5 748V38.5H1400" fill="none" stroke="#000" />
        <rect x="378" y="747" width="1000" height="2" />
        {[352, 388, 424].map(y => (
          <rect key={y} x="646" y={y} width="11" height="11" fill="#404040" />
        ))}
        <text x="662" y="417" fontFamily="Liberation Sans Narrow, Liberation Sans, sans-serif" fontSize="68" fill="#fff" stroke="#000" strokeWidth="2">
          T
        </text>
        <path d="M0 393.5H2000" stroke="#000" strokeDasharray="5 4" />
      </svg>
    </Sheet>
    <HScroll>
      <Chevron to="left" color="#606060" />
    </HScroll>
  </View>
)

const Marking = () => (
  <MarkPanel>
    <Row $gap={5} $margin="3px 7px 0 0">
      <Button $width={89} $height={61}>
        <span>红光<Latin>(F1)</Latin></span>
      </Button>
      <Button $width={89} $height={61} $default>
        <span>标刻<Latin>(F2)</Latin></span>
      </Button>
    </Row>
    <Column $top={6} $gap={15}>
      <CheckLine>
        <Check type="checkbox" />
        <span><Latin>[<u>C</u>]</Latin>连续加工</span>
      </CheckLine>
      <CheckLine>
        <Check type="checkbox" />
        <span><Latin>[<u>S</u>]</Latin>选择加工</span>
      </CheckLine>
    </Column>
    <Column $top={1} $gap={6}>
      <CountLine>
        <span>零件</span>
        <Field $width={68} defaultValue="0" />
      </CountLine>
      <CountLine>
        <span>总数</span>
        <Field $width={68} defaultValue="0" />
      </CountLine>
    </Column>
    <Row $margin="1px 0 0 2px">
      <Button $width={32} $height={32}>
        <Latin>R</Latin>
      </Button>
    </Row>
    <Row $margin="36px 5px 0 1px">
      <Button $width={89} $height={36}>
        <span>参数<Latin>(F3)</Latin></span>
      </Button>
    </Row>
    <Column $top={1} $gap={10}>
      <Clock>00:00:00</Clock>
      <Clock>00:00:00</Clock>
    </Column>
  </MarkPanel>
)

const App = () => (
  <>
    <GlobalStyle />
    <Header>
      <Rule />
      <LogoBox>
        <Logo />
      </LogoBox>
      <Rule $tail />
    </Header>
    <Window>
      <TitleBar>
        <Icon size={24}>
          <text x="12" y="16" textAnchor="middle" fontFamily="DejaVu Sans, sans-serif" fontWeight="bold" fontSize="20" fill="#c8323c">
            2
          </text>
          <text x="12" y="24" textAnchor="middle" fontFamily="Liberation Sans, sans-serif" fontSize="7" fill="#3c3c6c">
            EZCAD
          </text>
        </Icon>
        EzCad2.14.9 - 无标题
      </TitleBar>
      <MenuBar>
        {menus.map(([name, key]) => (
          <MenuItem key={key}>
            {name}(<u>{key}</u>)
          </MenuItem>
        ))}
      </MenuBar>
      <Toolbar>
        <Gripper $height={48} $margin="4px 4px 0 4px" />
        {mainTools.map((tool, i) =>
          tool ? (
            <ToolButton key={tool[0]} title={tool[0]} $checked={tool[2]}>
              {tool[1]}
            </ToolButton>
          ) : (
            <Divider key={i} />
          )
        )}
        <BarEnd />
        <Gripper $height={48} $margin="4px 6px 0 -3px" />
        {zoomTools.map(([name, d]) => (
          <ToolButton key={name} title={name}>
            <ZoomIcon d={d} />
          </ToolButton>
        ))}
      </Toolbar>
      <Workspace>
        <Dock>
          <DockInner>
            <ObjectList />
            <Splitter />
            <TextPanel />
          </DockInner>
        </Dock>
        <ToolColumn>
          <ColumnGrip />
          {drawTools.map(([name, icon], i) => (
            <DrawButton key={name} title={name} $checked={i === 0}>
              {icon}
            </DrawButton>
          ))}
        </ToolColumn>
        <Center>
          <EditBar>
            <Gripper $height={45} $margin="0 0 0 4px" />
            {editTools.map(([name, icon, left, current]) => (
              <EditButton key={name} title={name} $left={left} $default={current}>
                {icon}
              </EditButton>
            ))}
          </EditBar>
          <Drawing />
          <Marking />
        </Center>
      </Workspace>
      <StatusBar>选取: 1对象被选取 对象:文本 尺寸: X19.023 Y6.680</StatusBar>
      <Taskbar />
    </Window>
  </>
)

export default App
